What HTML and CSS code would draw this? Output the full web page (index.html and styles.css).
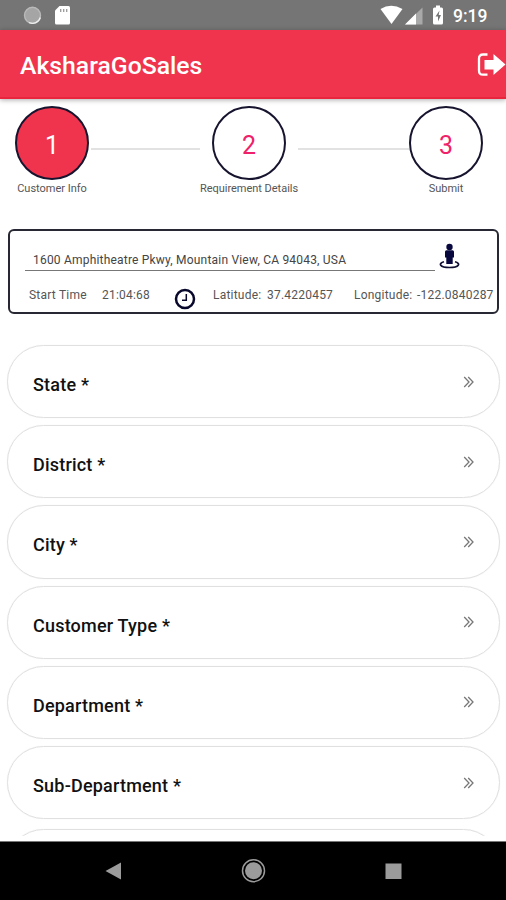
FILE: index.html
```html
<!DOCTYPE html>
<html lang="en">
<head>
<meta charset="utf-8">
<title>AksharaGoSales</title>
<link rel="stylesheet" href="styles.css">
</head>
<body>
<div class="screen">
  <div class="status">
    <svg class="status-left" width="80" height="30" viewBox="0 0 80 30">
      <circle cx="32.5" cy="15.3" r="8.2" fill="#a5a5a5"/>
      <circle cx="32.5" cy="15.3" r="8" fill="none" stroke="#b9b9b9" stroke-width="1.4"/>
      <path d="M40.3 17.5A8 8 0 0 1 29 22.5" fill="none" stroke="#eee" stroke-width="1.3"/>
      <path d="M59.5 6H68.5Q70 6 70 7.500V23Q70 24.500 68.500 24.500H56.500Q55 24.500 55 23V10.500Z" fill="#fff"/>
      <path d="M60.700 9v3M63.700 9v3M66.700 9v3" stroke="#999" stroke-width="1.300"/>
    </svg>
    <svg class="status-right" width="66" height="30" viewBox="0 0 66 30">
      <path d="M.5 9Q11 2.500 22.500 9L11.500 24Z" fill="#fff"/>
      <path d="M42.500 7.500V24.500H25Z" fill="#a9a9a9"/>
      <path d="M36 13.500V24.500H25Z" fill="#fff"/>
      <path d="M56 5.500h4v2h1.500q1.500 0 1.500 1.500v14q0 1.500-1.500 1.500h-7q-1.500 0-1.500-1.500V9q0-1.500 1.500-1.500H56Z" fill="#fff"/>
      <path d="M59.500 10.500 55.500 16.500H58V21.500L61 15H58.700Z" fill="#757575"/>
    </svg>
    <span class="clock">9:19</span>
  </div>
  <header class="appbar">
    <h1>AksharaGoSales</h1>
    <svg width="30" height="26" viewBox="0 0 30 26">
      <path d="M11.500 2.500H7Q3 2.500 3 6.500V18.700Q3 22.700 7 22.700H11.500" fill="none" stroke="#fff" stroke-width="2.300"/>
      <path d="M8.500 8H17.500V2L29.500 12.500L17.500 23V17.500H8.500Z" fill="#fff"/>
    </svg>
  </header>
  <main>
    <div class="steps">
      <div class="step first"><div class="circle active">1</div><span>Customer Info</span></div>
      <i class="line one"></i>
      <div class="step second"><div class="circle">2</div><span>Requirement Details</span></div>
      <i class="line two"></i>
      <div class="step third"><div class="circle">3</div><span>Submit</span></div>
    </div>
    <section class="location">
      <div class="address-row">
        <div class="address">1600 Amphitheatre Pkwy, Mountain View, CA 94043, USA</div>
        <svg width="22" height="26" viewBox="0 0 22 26">
          <circle cx="10.500" cy="4" r="3.200" fill="#08083f"/>
          <path d="M7.500 7.200H13.500Q15 7.200 15 8.700V14.500H13.700V21H7.300V14.500H6V8.700Q6 7.200 7.500 7.200Z" fill="#08083f"/>
          <path d="M5 18.800C-1 20.300 .500 24.500 10.500 24.500S22 20.300 16 18.800" fill="none" stroke="#101035" stroke-width="1.700"/>
        </svg>
      </div>
      <div class="meta">
        <span class="start">Start Time</span><span class="time">21:04:68</span>
        <svg width="22" height="22" viewBox="0 0 22 22"><circle cx="11" cy="11" r="9" fill="#fff" stroke="#08082c" stroke-width="2.500"/><path d="M12.300 6V12.200H8" fill="none" stroke="#08082c" stroke-width="1.500"/></svg>
        <span class="lat">Latitude:</span><span class="latv">37.4220457</span>
        <span class="lon">Longitude:</span><span class="lonv">-122.0840287</span>
      </div>
    </section>
    <div class="fields">
      <div class="field"><span>State *</span><svg width="12" height="12" viewBox="0 0 12 12"><path d="M1.200 1 6 6 1.200 11M5.200 1 10 6 5.200 11"/></svg></div>
      <div class="field"><span>District *</span><svg width="12" height="12" viewBox="0 0 12 12"><path d="M1.200 1 6 6 1.200 11M5.200 1 10 6 5.200 11"/></svg></div>
      <div class="field"><span>City *</span><svg width="12" height="12" viewBox="0 0 12 12"><path d="M1.200 1 6 6 1.200 11M5.200 1 10 6 5.200 11"/></svg></div>
      <div class="field"><span>Customer Type *</span><svg width="12" height="12" viewBox="0 0 12 12"><path d="M1.200 1 6 6 1.200 11M5.200 1 10 6 5.200 11"/></svg></div>
      <div class="field"><span>Department *</span><svg width="12" height="12" viewBox="0 0 12 12"><path d="M1.200 1 6 6 1.200 11M5.200 1 10 6 5.200 11"/></svg></div>
      <div class="field"><span>Sub-Department *</span><svg width="12" height="12" viewBox="0 0 12 12"><path d="M1.200 1 6 6 1.200 11M5.200 1 10 6 5.200 11"/></svg></div>
      <div class="field last"></div>
    </div>
  </main>
  <nav>
    <svg width="506" height="59" viewBox="0 0 506 59">
      <path d="M105.500 30 121 21.500V38.500Z" fill="#9b9b9b"/>
      <circle cx="253.500" cy="29.700" r="11" fill="none" stroke="#9b9b9b" stroke-width="1.500"/>
      <circle cx="253.500" cy="29.700" r="8.500" fill="#9b9b9b"/>
      <rect x="385.500" y="22.500" width="16" height="15.500" fill="#9b9b9b"/>
    </svg>
  </nav>
</div>
</body>
</html>
```
FILE: styles.css
```css
* { box-sizing: border-box; }
body { margin: 0; font-family: Roboto, "Liberation Sans", sans-serif; background: #fff; }
svg { display: block; flex: none; }
span { white-space: nowrap; }
.screen { width: 506px; height: 900px; display: flex; flex-direction: column; overflow: hidden; }
.status { height: 30px; flex: none; background: #757575; display: flex; align-items: center; }
.status-right { margin-left: 300px; }
.clock { margin-left: 7px; color: #fff; font-size: 17.5px; line-height: 30px; font-weight: 500; padding-top: 2px; }
.appbar { height: 69px; flex: none; background: #f0344d; border-bottom: 2px solid #e9243d; box-shadow: 0 1px 5px #0005; display: flex; align-items: center; justify-content: space-between; padding: 5px 0 0 20px; position: relative; }
.appbar svg { margin-top: -3px; }
h1 { margin: 0; color: #fff; font-size: 24.75px; font-weight: 500; line-height: 30px; }
main { height: 742px; flex: none; overflow: hidden; }
.steps { display: flex; padding: 7px 0 0 15px; height: 130px; }
.step { display: flex; flex-direction: column; align-items: center; flex: none; }
.first { width: 74px; }
.second { width: 98px; }
.third { width: 74px; }
.line { height: 2px; background: #e2e2e2; margin-top: 42px; flex: none; }
.one { width: 109px; margin-left: 2px; }
.two { width: 111px; }
.circle { width: 74px; height: 74px; border: 2px solid #17142f; border-radius: 50%; color: #ef2168; font-size: 25px; line-height: 75px; text-align: center; }
.active { background: #f0344d; color: #fff; }
.step span { font-size: 11px; line-height: 13px; color: #555; margin-top: 2px; letter-spacing: -.02px; }
.location { margin: 0 7px 0 8px; height: 85px; border: 2px solid #282834; border-radius: 6px; }
.address-row { display: flex; padding: 12px 0 0 15px; height: 41px; }
.address { width: 410px; height: 28px; border-bottom: 1px solid #777; padding: 8px 0 0 8px; font-size: 12px; line-height: 18px; letter-spacing: .2px; color: #444; white-space: nowrap; }
.address-row svg { margin-left: 4px; }
.meta { display: flex; align-items: center; height: 34px; padding-left: 19px; margin-top: 7px; font-size: 12px; letter-spacing: .22px; color: #555; }
.meta span { flex: none; line-height: 16px; margin-top: -2px; }
.start { width: 73px; }
.time { width: 72px; }
.meta svg { margin-top: 5px; }
.lat { width: 54px; margin-left: 17px; }
.latv { width: 87px; }
.lon { width: 63px; }
.fields { padding: 31px 6px 0 7px; height: 521.5px; overflow: hidden; }
.field { height: 73.2px; margin-bottom: 7px; border: 1.5px solid #e0e0e0; box-shadow: 0 0 1px #e4e4e4; border-radius: 37px; display: flex; justify-content: space-between; align-items: center; padding: 0 24px 0 25px; }
.field span { font-size: 18px; letter-spacing: .2px; line-height: 24px; font-weight: 500; color: #111; margin-top: 7px; }
.field svg { fill: none; stroke: #777; stroke-width: 1.3; }
.last { margin-top: 9.5px; }
nav { height: 59px; margin-top: auto; flex: none; background: #000; border-top: 1px solid #777; }
nav svg { margin-top: -1px; }
```
